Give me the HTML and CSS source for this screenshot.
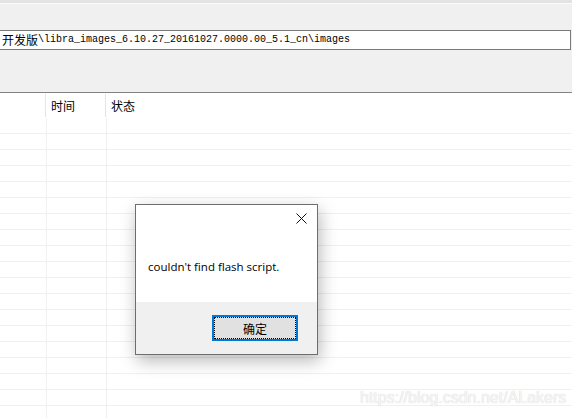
FILE: index.html
```html
<!DOCTYPE html>
<html>
<head>
<meta charset="utf-8">
<link rel="stylesheet" href="styles.css">
</head>
<body>
<div class="app">
  <div class="top-strip"></div>
  <div class="toolbar">
    <div class="pathbox"><span class="cjk">开发版</span><span class="mono">\libra_images_6.10.27_20161027.0000.00_5.1_cn\images</span></div>
  </div>
  <div class="list">
    <div class="head">
      <div class="c1"></div>
      <div class="c2">时间</div>
      <div class="c3">状态</div>
    </div>
    <div class="row"><div class="c1"></div><div class="c2"></div><div class="c3"></div></div>
    <div class="row"><div class="c1"></div><div class="c2"></div><div class="c3"></div></div>
    <div class="row"><div class="c1"></div><div class="c2"></div><div class="c3"></div></div>
    <div class="row"><div class="c1"></div><div class="c2"></div><div class="c3"></div></div>
    <div class="row"><div class="c1"></div><div class="c2"></div><div class="c3"></div></div>
    <div class="row"><div class="c1"></div><div class="c2"></div><div class="c3"></div></div>
    <div class="row"><div class="c1"></div><div class="c2"></div><div class="c3"></div></div>
    <div class="row"><div class="c1"></div><div class="c2"></div><div class="c3"></div></div>
    <div class="row"><div class="c1"></div><div class="c2"></div><div class="c3"></div></div>
    <div class="row"><div class="c1"></div><div class="c2"></div><div class="c3"></div></div>
    <div class="row"><div class="c1"></div><div class="c2"></div><div class="c3"></div></div>
    <div class="row"><div class="c1"></div><div class="c2"></div><div class="c3"></div></div>
    <div class="row"><div class="c1"></div><div class="c2"></div><div class="c3"></div></div>
    <div class="row"><div class="c1"></div><div class="c2"></div><div class="c3"></div></div>
    <div class="row"><div class="c1"></div><div class="c2"></div><div class="c3"></div></div>
    <div class="row"><div class="c1"></div><div class="c2"></div><div class="c3"></div></div>
    <div class="row"><div class="c1"></div><div class="c2"></div><div class="c3"></div></div>
    <div class="row"><div class="c1"></div><div class="c2"></div><div class="c3"></div></div>
    <div class="row"><div class="c1"></div><div class="c2"></div><div class="c3"></div></div>
  </div>

  <div class="dialog">
    <div class="dlg-body">
      <p class="msg">couldn't find flash script.</p>
    </div>
    <div class="dlg-foot">
      <div class="btn">确定</div>
    </div>
    <svg class="close" width="11" height="11" viewBox="0 0 11 11">
      <path d="M0.5 0.5 L10.5 10.5 M10.5 0.5 L0.5 10.5" stroke="#111" stroke-width="1" fill="none"/>
    </svg>
  </div>

  <div class="watermark">https://blog.csdn.net/ALakers</div>
</div>
</body>
</html>
```
FILE: styles.css
```css
html, body {
  margin: 0;
  padding: 0;
}
body {
  width: 572px;
  height: 418px;
  overflow: hidden;
  background: #ffffff;
  font-family: "Noto Sans CJK SC", "Liberation Sans", sans-serif;
}
.app {
  position: relative;
  width: 572px;
  height: 418px;
  overflow: hidden;
}
.top-strip {
  height: 3px;
  background: #e3e3e6;
  border-bottom: 1px solid #fbfbfb;
}
.toolbar {
  height: 89px;
  background: #f0f0f0;
  border-bottom: 1px solid #828282;
  padding-top: 26px;
  box-sizing: border-box;
}
.pathbox {
  height: 20px;
  box-sizing: border-box;
  margin-left: -1px;
  margin-right: 1px;
  border: 1px solid #7a7a7a;
  background: #fff;
  padding-left: 2px;
  display: flex;
  align-items: center;
  white-space: nowrap;
  color: #000;
}
.cjk {
  font-family: "Noto Sans CJK SC", sans-serif;
  font-size: 12px;
  line-height: 16px;
}
.mono {
  font-family: "Liberation Mono", monospace;
  font-size: 10px;
  line-height: 16px;
}
.list {
  background: #fff;
}
.head {
  display: flex;
  height: 25px;
  align-items: stretch;
}
.head .c1, .head .c2, .head .c3 {
  font-size: 12px;
  color: #000;
  display: flex;
  align-items: center;
  padding-bottom: 1px;
  box-sizing: border-box;
}
.c1 {
  width: 46px;
  border-right: 1px solid #f0f0f0;
}
.c2 {
  width: 60px;
  padding-left: 5px;
  border-right: 1px solid #f0f0f0;
  box-sizing: border-box;
}
.c3 {
  flex: 1;
  padding-left: 5px;
}
.head .c1, .head .c2 {
  border-right: 1px solid #e5e5e5;
  margin: 1px 0 0 0;
  height: 23px;
}
.row {
  display: flex;
  height: 16px;
  box-sizing: border-box;
  border-bottom: 1px solid #f0f0f0;
}

/* dialog */
.dialog {
  position: absolute;
  left: 135px;
  top: 204px;
  width: 183px;
  height: 151px;
  box-sizing: border-box;
  border: 1px solid #6e6e6e;
  background: #f0f0f0;
  box-shadow: 2px 6px 16px rgba(0, 0, 0, 0.28);
  display: flex;
  flex-direction: column;
}
.dlg-body {
  height: 97px;
  background: #fff;
  padding: 54px 0 0 12px;
  box-sizing: border-box;
}
.msg {
  margin: 0;
  font-family: "Open Sans", "Liberation Sans", sans-serif;
  font-size: 11.5px;
  line-height: 16px;
  color: #000;
}
.dlg-foot {
  flex: 1;
  background: #f0f0f0;
  display: flex;
  justify-content: flex-end;
  align-items: flex-start;
  padding: 13px 19px 0 0;
}
.btn {
  width: 86px;
  height: 26px;
  box-sizing: border-box;
  border: 2px solid #0078d7;
  background: #e1e1e1;
  outline: 1px dotted #000;
  outline-offset: -3px;
  display: flex;
  align-items: center;
  justify-content: center;
  font-size: 12px;
  color: #000;
}
.close {
  position: absolute;
  left: 160px;
  top: 8px;
}
.watermark {
  position: absolute;
  left: 360px;
  top: 388px;
  font-family: "Liberation Sans", sans-serif;
  font-size: 16px;
  line-height: 20px;
  color: #f6f6f6;
  text-shadow: 0 0 1px rgba(0, 0, 0, 0.22);
  white-space: nowrap;
}
```
